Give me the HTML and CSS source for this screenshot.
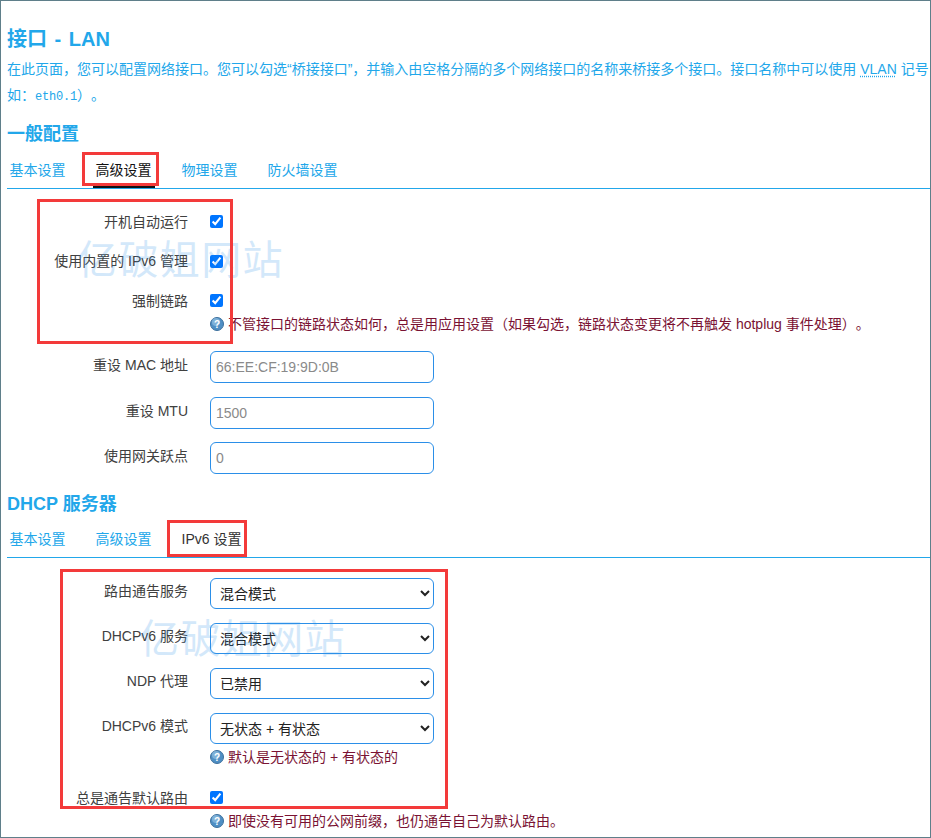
FILE: index.html
```html
<!DOCTYPE html>
<html lang="zh-CN">
<head>
<meta charset="utf-8">
<title>接口 - LAN</title>
<link rel="stylesheet" href="styles.css">
</head>
<body>
<div class="frame">
  <h2 class="page-title">接口 - LAN</h2>
  <p class="desc">在此页面，您可以配置网络接口。您可以勾选“桥接接口”，并输入由空格分隔的多个网络接口的名称来桥接多个接口。接口名称中可以使用 <abbr class="abbr">VLAN</abbr> 记号<br>如：<span class="mono">eth0.1</span>）。</p>

  <section class="section-one">
    <h3 class="section-title">一般配置</h3>
    <ul class="tabs">
      <li class="tab">基本设置</li>
      <li class="tab active">高级设置</li>
      <li class="tab">物理设置</li>
      <li class="tab">防火墙设置</li>
    </ul>
    <div class="fields fields-one">
      <div class="row row-check"><label class="label">开机自动运行</label><input class="check" type="checkbox" checked></div>
      <div class="row row-check"><label class="label">使用内置的 IPv6 管理</label><input class="check" type="checkbox" checked></div>
      <div class="row row-check"><label class="label">强制链路</label><input class="check" type="checkbox" checked></div>
      <div class="help help-tight"><svg class="help-icon" viewBox="0 0 14 14"><circle cx="7" cy="7" r="6.5" fill="#4f8fc4" stroke="#3c6f9c"/><circle cx="6" cy="5" r="4" fill="#9cc6e6" opacity=".6"/><text x="7" y="10.5" class="help-q">?</text></svg><span>不管接口的链路状态如何，总是用应用设置（如果勾选，链路状态变更将不再触发 hotplug 事件处理）。</span></div>
      <div class="row row-input"><label class="label">重设 MAC 地址</label><input class="text" type="text" placeholder="66:EE:CF:19:9D:0B"></div>
      <div class="row row-input"><label class="label">重设 MTU</label><input class="text" type="text" placeholder="1500"></div>
      <div class="row row-input"><label class="label">使用网关跃点</label><input class="text" type="text" placeholder="0"></div>
    </div>
  </section>

  <section class="section-two">
    <h3 class="section-title">DHCP 服务器</h3>
    <ul class="tabs">
      <li class="tab">基本设置</li>
      <li class="tab">高级设置</li>
      <li class="tab current">IPv6 设置</li>
    </ul>
    <div class="fields fields-two">
      <div class="row row-select"><label class="label">路由通告服务</label><select class="select"><option>混合模式</option></select></div>
      <div class="row row-select"><label class="label">DHCPv6 服务</label><select class="select"><option>混合模式</option></select></div>
      <div class="row row-select"><label class="label">NDP 代理</label><select class="select"><option>已禁用</option></select></div>
      <div class="row row-select"><label class="label">DHCPv6 模式</label><select class="select"><option>无状态 + 有状态</option></select></div>
      <div class="help help-loose"><svg class="help-icon" viewBox="0 0 14 14"><circle cx="7" cy="7" r="6.5" fill="#4f8fc4" stroke="#3c6f9c"/><circle cx="6" cy="5" r="4" fill="#9cc6e6" opacity=".6"/><text x="7" y="10.5" class="help-q">?</text></svg><span>默认是无状态的 + 有状态的</span></div>
      <div class="row row-check"><label class="label">总是通告默认路由</label><input class="check" type="checkbox" checked></div>
      <div class="help help-tight"><svg class="help-icon" viewBox="0 0 14 14"><circle cx="7" cy="7" r="6.5" fill="#4f8fc4" stroke="#3c6f9c"/><circle cx="6" cy="5" r="4" fill="#9cc6e6" opacity=".6"/><text x="7" y="10.5" class="help-q">?</text></svg><span>即使没有可用的公网前缀，也仍通告自己为默认路由。</span></div>
    </div>
  </section>

  <div class="watermark wm-one">亿破姐网站</div>
  <div class="watermark wm-two">亿破姐网站</div>
  <div class="mark mark-tab-one"></div>
  <div class="mark mark-fields-one"></div>
  <div class="mark mark-tab-two"></div>
  <div class="mark mark-fields-two"></div>
</div>
</body>
</html>
```
FILE: styles.css
```css
* { box-sizing: border-box; }
html, body { margin: 0; padding: 0; background: #fff; }
body { font-family: "Liberation Sans", "Noto Sans CJK SC", sans-serif; font-size: 14px; color: #404040; text-spacing-trim: space-all; }
.frame { position: relative; width: 931px; height: 838px; overflow: hidden; border: 1px solid #5f7f8a; padding: 25px 0 0 6px; }
.page-title { margin: 0; font-size: 20px; line-height: 26px; font-weight: 700; color: #22a7ea; word-spacing: 2px; }
.desc { margin: 4px 0 0; width: 1000px; font-size: 14px; line-height: 26px; color: #22a7ea; white-space: nowrap; }
.abbr { text-decoration: underline dotted; text-underline-offset: 2px; }
.mono { font-family: "Liberation Mono", monospace; font-size: 12px; letter-spacing: -.2px; line-height: 0; }
.section-one { margin-top: 15px; }
.section-two { margin-top: 5.5px; }
.section-two .tabs { margin-top: 10px; }
.section-title { margin: 0; font-size: 18px; line-height: 22px; font-weight: 700; color: #22a7ea; }
.tabs { list-style: none; display: flex; margin: 11px 0 0; padding: 0; height: 33px; border-bottom: 1px solid #22a7ea; width: 924px; }
.tab { padding: 1px 3px 0 2.5px; margin-right: 24.5px; line-height: 26px; height: 32px; color: #22a7ea; }
.tab.active { color: #111; border-bottom: 2px solid #111; }
.tab.current { color: #333; }
.fields { display: flex; flex-direction: column; }
.fields-one { padding-top: 26px; }
.fields-two { padding-top: 20px; }
.row { display: flex; align-items: center; }
.label { width: 181px; margin-right: 22px; text-align: right; line-height: 20px; color: #404040; }
.row-check { height: 13px; margin-bottom: 26.5px; }
.row-input { height: 32px; margin-bottom: 13.5px; align-items: flex-start; }
.row-input .label { padding-top: 4px; }
.row-select { height: 31px; margin-bottom: 14px; align-items: flex-start; }
.row-select .label { padding-top: 3px; }
.check { width: 13px; height: 13px; margin: 0; accent-color: #0075ff; }
.text, .select { width: 224px; border: 1px solid #2b8fe8; border-radius: 6px; background: #fff; font: inherit; }
.text { height: 32px; padding: 0 5px; }
.text::placeholder { color: #8a8a8a; opacity: 1; }
.select { height: 31px; padding: 0 5px; color: #222; }
.help { display: flex; align-items: center; gap: 4px; margin-left: 203px; line-height: 20px; color: #7a1233; white-space: nowrap; }
.help-icon { width: 14px; height: 14px; flex: none; }
.help-q { font-size: 10px; font-weight: 700; fill: #fff; text-anchor: middle; }
.help-tight { margin-top: -19.5px; margin-bottom: 17px; }
.help-loose { margin-top: -11px; margin-bottom: 24px; }
.watermark { position: absolute; font-size: 40px; line-height: 44px; color: #2b8fe8; opacity: .2; letter-spacing: 1.4px; white-space: nowrap; }
.wm-one { left: 76px; top: 237px; }
.wm-two { left: 138px; top: 616px; }
.mark { position: absolute; border: 3px solid #f33a3a; }
.mark-tab-one { left: 81px; top: 151px; width: 77px; height: 34px; }
.mark-fields-one { left: 36px; top: 198px; width: 196px; height: 145px; }
.mark-tab-two { left: 166px; top: 519px; width: 80px; height: 37px; }
.mark-fields-two { left: 59px; top: 568px; width: 388px; height: 240px; }
```
